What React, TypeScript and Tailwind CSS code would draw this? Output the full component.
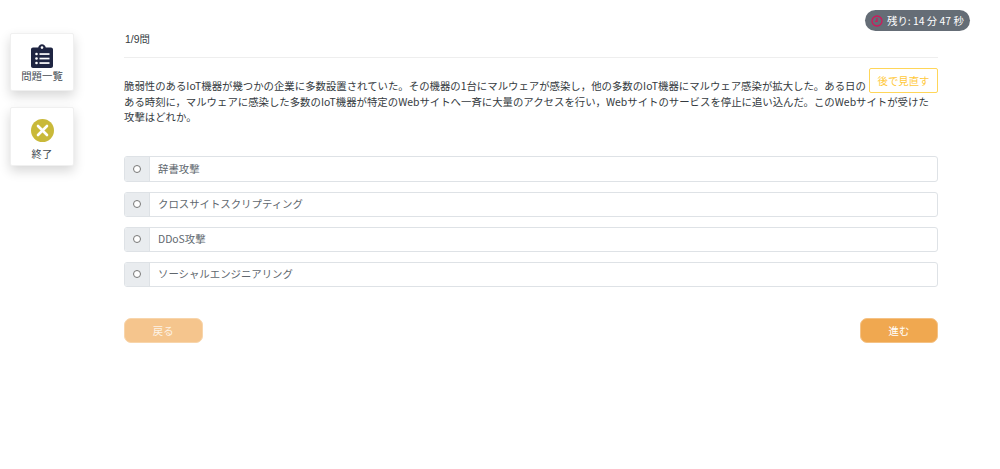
import React from 'react';

const choices = ['辞書攻撃', 'クロスサイトスクリプティング', 'DDoS攻撃', 'ソーシャルエンジニアリング'];

const ClipboardIcon = () => (
  <svg width="24" height="24" viewBox="0 0 24 24" fill="#1f2542">
    <path d="M3 3.500h5.200C8.600 1.600 10.100.3 12 .3s3.400 1.300 3.800 3.200H21c1.100 0 2 .9 2 2V22c0 1.100-.9 2-2 2H3c-1.100 0-2-.9-2-2V5.500c0-1.100.9-2 2-2z" />
    <circle cx="12" cy="3.600" r="1.300" fill="#fff" />
    <g fill="#fff">
      <circle cx="6.500" cy="10" r="1.300" />
      <circle cx="6.500" cy="14.500" r="1.300" />
      <circle cx="6.500" cy="19" r="1.300" />
      <rect x="9.500" y="9.200" width="10" height="1.700" />
      <rect x="9.500" y="13.700" width="10" height="1.700" />
      <rect x="9.500" y="18.200" width="10" height="1.700" />
    </g>
  </svg>
);

const CloseCircleIcon = () => (
  <svg width="23" height="23" viewBox="0 0 23 23">
    <circle cx="11.500" cy="11.500" r="11.500" fill="#c9b93a" />
    <path d="M7 7l9 9M16 7l-9 9" stroke="#fff" strokeWidth="2.600" strokeLinecap="round" />
  </svg>
);

const ClockIcon = () => (
  <svg width="12" height="12" viewBox="0 0 12 12" fill="none" stroke="#d0185c" strokeWidth="1.300">
    <circle cx="6" cy="6" r="5" />
    <path d="M6 3v3.300H4" />
  </svg>
);

const SideCard = ({ icon, label, className }: { icon: React.ReactNode; label: string; className: string }) => (
  <div className={`flex w-[64px] flex-col items-center rounded-[2px] border border-[#f0f0f0] bg-white shadow-[0_5px_12px_rgba(0,0,0,0.16)] ${className}`}>
    {icon}
    <span className="text-[10.4px] leading-[16px] text-[#444b52]">{label}</span>
  </div>
);

export default function App() {
  return (
    <div className="relative flex h-[469px] w-[1000px] overflow-hidden bg-white font-['Noto_Sans_CJK_JP',sans-serif] text-[#343a40]">
      <aside className="flex w-[124px] shrink-0 flex-col gap-[16px] pl-[10px] pt-[33px]">
        <SideCard icon={<ClipboardIcon />} label="問題一覧" className="h-[58px] pt-[10px]" />
        <SideCard icon={<CloseCircleIcon />} label="終了" className="h-[59px] gap-[4px] pt-[11px]" />
      </aside>

      <main className="w-[814px] pt-[33px]">
        <div className="h-[25px] border-b border-[#eeeeee] pl-px font-['Liberation_Sans','Noto_Sans_CJK_JP',sans-serif] text-[10.4px] leading-[14px]">1/9問</div>

        <div className="mt-[10px] h-[88.4px] text-[10.4px] leading-[15.6px]">
          <button className="float-right ml-[2px] h-[25px] w-[69px] rounded-[2px] border border-[#ffd659] bg-white text-[10.4px] text-[#ffc93c]">後で見直す</button>
          <p className="pt-[10px]">
            脆弱性のあるIoT機器が幾つかの企業に多数設置されていた。その機器の1台にマルウェアが感染し，他の多数のIoT機器にマルウェア感染が拡大した。ある日のある時刻に，マルウェアに感染した多数のIoT機器が特定のWebサイトへ一斉に大量のアクセスを行い，Webサイトのサービスを停止に追い込んだ。このWebサイトが受けた攻撃はどれか。
          </p>
        </div>

        <div className="flex flex-col gap-[9.9px]">
          {choices.map((choice) => (
            <div key={choice} className="flex h-[25.25px] overflow-hidden rounded-[3px] border border-[#dee2e6]">
              <div className="flex w-[25px] shrink-0 items-center justify-center border-r border-[#dee2e6] bg-[#e9ecef]">
                <span className="h-[8px] w-[8px] rounded-full border border-[#777] bg-white" />
              </div>
              <div className="flex flex-1 items-center pb-[1px] pl-[8px] text-[10.4px] text-[#60676e]">{choice}</div>
            </div>
          ))}
        </div>

        <div className="mt-[30.5px] flex justify-between">
          <button className="h-[25.5px] w-[78.5px] rounded-[7px] border border-[#f8d5ab] bg-[#f5c58d] text-[10.4px] text-[#fdf3e6]">戻る</button>
          <button className="h-[25.5px] w-[78px] rounded-[7px] border border-[#f5c285] bg-[#f0a850] text-[10.4px] text-white">進む</button>
        </div>
      </main>

      <div className="absolute left-[865px] top-[10px] flex h-[21px] w-[105px] items-center gap-[4px] rounded-full bg-[#656d76] pl-[6px] text-[10.4px] text-white">
        <ClockIcon />
        <span>残り: 14 分 47 秒</span>
      </div>
    </div>
  );
}
